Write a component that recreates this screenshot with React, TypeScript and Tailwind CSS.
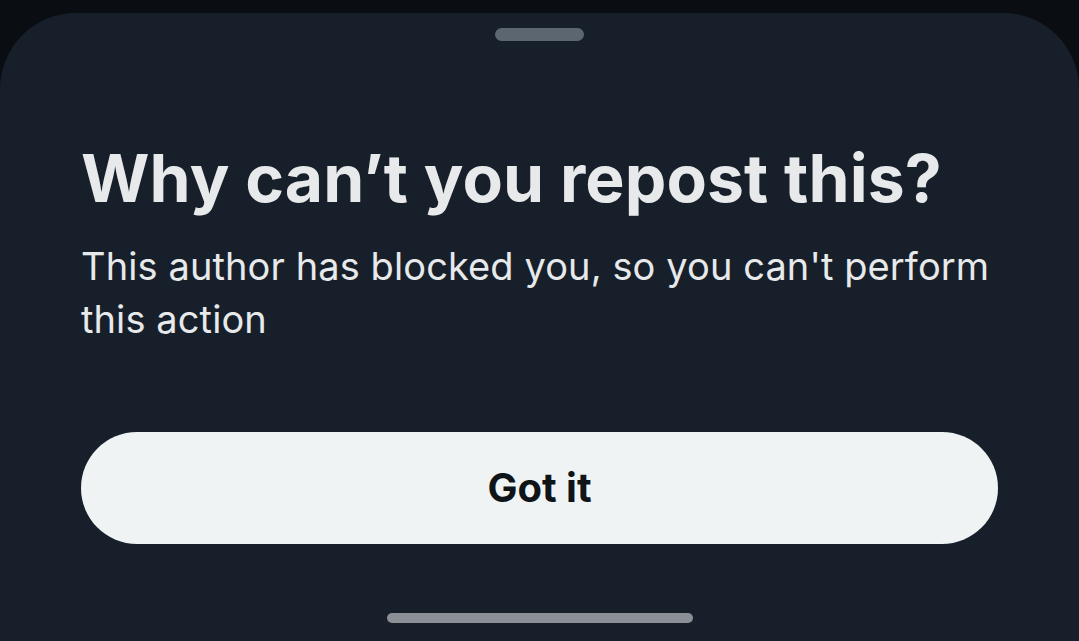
import React from "react";

export default function App() {
  return (
    <div
      className="w-[1079px] h-[641px] bg-[#0a0e12] pt-[13px] overflow-hidden"
      style={{ fontFamily: "Inter, 'Noto Sans', sans-serif" }}
    >
      <div className="h-[628px] bg-[#17202a] rounded-t-[76px] flex flex-col px-[81px]">
        <div className="flex justify-center pt-[15px]">
          <div className="w-[89px] h-[13px] rounded-full bg-[#5b6670]" />
        </div>
        <h1 className="mt-[97px] text-[66px] leading-[80px] font-bold text-[#e7e9ea] tracking-[0.1px]">
          Why can’t you repost this?
        </h1>
        <p className="mt-[22px] text-[38px] leading-[53px] text-[#e7e9ea] tracking-[0.1px]">
          This author has blocked you, so you can't perform this action
        </p>
        <button className="mt-[86px] h-[112px] w-full rounded-full bg-[#eff3f4] text-[#0f1419] text-[40px] font-bold">
          Got it
        </button>
        <div className="flex justify-center mt-[69px]">
          <div className="w-[306px] h-[10px] rounded-full bg-[#8b9096]" />
        </div>
      </div>
    </div>
  );
}
